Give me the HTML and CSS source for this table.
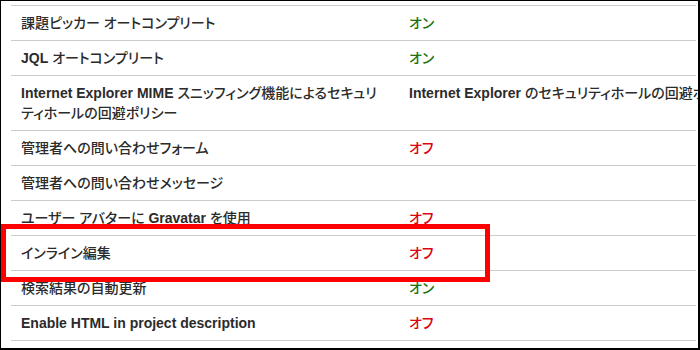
FILE: index.html
```html
<!DOCTYPE html>
<html lang="ja">
<head>
<meta charset="utf-8">
<link rel="stylesheet" href="styles.css">
</head>
<body>
<div class="frame">
  <table class="settings">
    <colgroup><col class="col-key"><col class="col-val"></colgroup>
    <tr><td class="key">課題ピッカー オートコンプリート</td><td class="val on">オン</td></tr>
    <tr><td class="key"><span class="en">JQL</span> オートコンプリート</td><td class="val on">オン</td></tr>
    <tr><td class="key"><span class="en">Internet Explorer MIME</span> スニッフィング機能によるセキュリティホールの回避ポリシー</td><td class="val text"><span class="en">Internet Explorer</span> のセキュリティホールの回避ポリシーを使用</td></tr>
    <tr><td class="key">管理者への問い合わせフォーム</td><td class="val off">オフ</td></tr>
    <tr><td class="key">管理者への問い合わせメッセージ</td><td class="val"></td></tr>
    <tr><td class="key">ユーザー アバターに <span class="en">Gravatar</span> を使用</td><td class="val off">オフ</td></tr>
    <tr><td class="key">インライン編集</td><td class="val off">オフ</td></tr>
    <tr><td class="key">検索結果の自動更新</td><td class="val on">オン</td></tr>
    <tr><td class="key"><span class="en">Enable HTML in project description</span></td><td class="val off">オフ</td></tr>
  </table>
  <div class="highlight"></div>
</div>
</body>
</html>
```
FILE: styles.css
```css
html, body {
  margin: 0;
  padding: 0;
  background: #fff;
}
.frame {
  position: relative;
  width: 700px;
  height: 350px;
  box-sizing: border-box;
  border-left: 1px solid #000;
  border-top: 1px solid #000;
  border-right: 2px solid #000;
  border-bottom: 2px solid #000;
  overflow: hidden;
  background: #fff;
}
.settings {
  margin: 4px 0 0 10px;
  width: 685px;
  table-layout: fixed;
  border-collapse: collapse;
  border-top: 1px solid #cccccc;
  font-family: "Liberation Sans", "Noto Sans CJK JP", sans-serif;
  font-size: 14px;
  font-weight: 500;
  line-height: 20px;
  color: #2b2b2b;
  font-feature-settings: "palt";
}
.col-key { width: 388px; }
.settings td {
  padding: 7px 10px;
  border-bottom: 1px solid #cccccc;
  vertical-align: top;
  text-align: left;
}
.en { font-weight: bold; }
.val { white-space: nowrap; overflow: visible; }
.on { color: #1a7310; }
.off { color: #dd0011; }
.highlight {
  position: absolute;
  left: 0;
  top: 223px;
  width: 489px;
  height: 58px;
  box-sizing: border-box;
  border: 5px solid #ff0000;
}
```
